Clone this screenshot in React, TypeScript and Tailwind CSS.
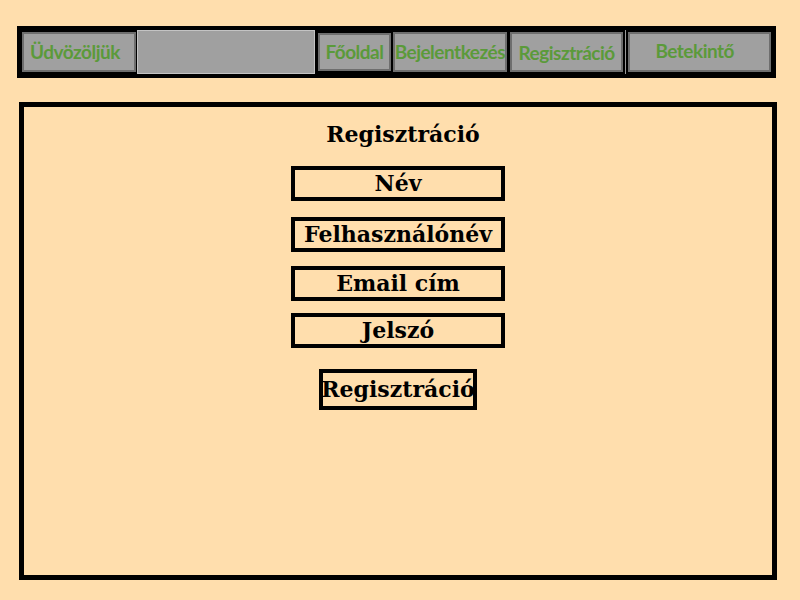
export default function App() {
  const navFont = { fontFamily: 'Lato, "Open Sans", sans-serif' };
  const serif = { fontFamily: '"DejaVu Serif", Georgia, serif' };

  const fields = [
    { label: 'Név', mt: '' },
    { label: 'Felhasználónév', mt: 'mt-[16px]' },
    { label: 'Email cím', mt: 'mt-[14px]' },
    { label: 'Jelszó', mt: 'mt-[12px]' },
  ];

  return (
    <div className="min-h-[600px] w-[800px] bg-[#ffdead] pt-[26px]">
      {/* Navigation */}
      <nav
        className="ml-[17px] flex h-[52px] w-[759px] items-center bg-black px-[5px]"
        style={navFont}
      >
        <div className="flex h-[40px] w-[114px] items-center border-2 border-[#6e6e6e] bg-[#a0a0a0] pl-[6px] text-[19px] font-bold tracking-[-0.5px] text-[#5b9a3a]">
          Üdvözöljük
        </div>
        <div className="ml-px h-[44px] w-[179px] border border-[#c4c4c4] bg-[#a0a0a0]" />
        <div className="ml-[3px] flex h-[38px] w-[73px] items-center justify-center border-2 border-[#6e6e6e] bg-[#a0a0a0] text-[19px] font-bold tracking-[-0.5px] text-[#5b9a3a]">
          Főoldal
        </div>
        <div className="ml-[2px] flex h-[40px] w-[114px] items-center justify-center border-2 border-[#6e6e6e] bg-[#a0a0a0] text-[19px] font-bold tracking-[-0.5px] text-[#5b9a3a]">
          Bejelentkezés
        </div>
        <div className="ml-[3px] flex h-[40px] w-[114px] items-center justify-center border-2 border-[#6e6e6e] bg-[#a0a0a0] pt-[2px] text-[19px] font-bold tracking-[-0.5px] text-[#5b9a3a]">
          Regisztráció
        </div>
        <div className="ml-[2px] h-[44px] w-px bg-[#9a9a9a]" />
        <div className="ml-[2px] flex h-[40px] w-[143px] items-start justify-center border-2 border-[#6e6e6e] bg-[#a0a0a0] pr-[10px] pt-[3px] text-[19px] font-bold tracking-[-0.5px] text-[#5b9a3a]">
          Betekintő
        </div>
      </nav>

      {/* Main */}
      <main
        className="ml-[19px] mt-[24px] flex h-[478px] w-[758px] flex-col items-center border-[5px] border-black pt-[12px]"
        style={serif}
      >
        <h1 className="ml-[10px] text-[22px] font-bold leading-[30px] text-black">Regisztráció</h1>
        <div className="mt-[17px] flex flex-col items-center">
          {fields.map((f) => (
            <div
              key={f.label}
              className={`flex h-[35px] w-[214px] items-center justify-center border-4 border-black text-[22px] font-bold text-black ${f.mt}`}
            >
              {f.label}
            </div>
          ))}
        </div>
        <button className="mt-[21px] flex h-[41px] w-[158px] items-center justify-center border-4 border-black text-[22px] font-bold text-black">
          Regisztráció
        </button>
      </main>
    </div>
  );
}
